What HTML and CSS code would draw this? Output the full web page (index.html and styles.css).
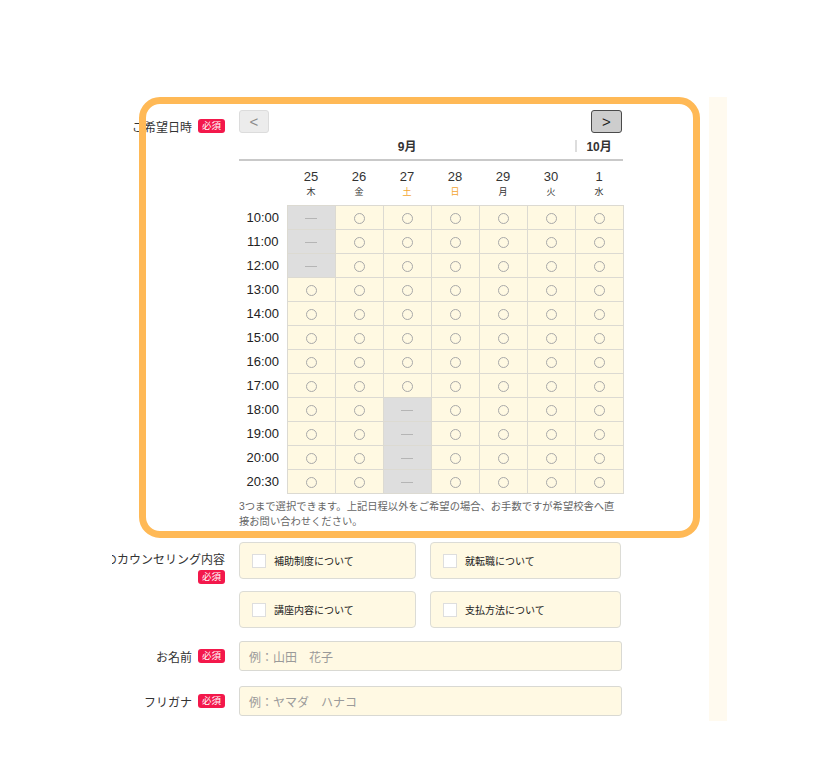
FILE: index.html
```html
<!DOCTYPE html>
<html lang="ja">
<head>
<meta charset="utf-8">
<title>ご希望日時</title>
<link rel="stylesheet" href="styles.css">
</head>
<body>
<div class="page">
  <div class="form">
    <div class="row row-date">
      <div class="label label-inline"><span class="ltext">ご希望日時</span><span class="badge">必須</span></div>
      <div class="content">
        <div class="nav">
          <button class="btn prev" type="button">&lt;</button>
          <button class="btn next" type="button">&gt;</button>
        </div>
        <table class="cal">
          <colgroup>
            <col class="c"><col class="c"><col class="c"><col class="c"><col class="c"><col class="c"><col class="c"><col class="c">
          </colgroup>
          <thead>
            <tr class="months">
              <th colspan="7" class="m9">9月</th>
              <th class="m10"><span class="sep"></span>10月</th>
            </tr>
            <tr class="days">
              <th></th>
              <th><span class="dn">25</span><span class="wd">木</span></th>
              <th><span class="dn">26</span><span class="wd">金</span></th>
              <th><span class="dn">27</span><span class="wd sat">土</span></th>
              <th><span class="dn">28</span><span class="wd sun">日</span></th>
              <th><span class="dn">29</span><span class="wd">月</span></th>
              <th><span class="dn">30</span><span class="wd">火</span></th>
              <th><span class="dn">1</span><span class="wd">水</span></th>
            </tr>
          </thead>
          <tbody>
            <tr><th>10:00</th><td class="off"><i class="dash"></i></td><td><i class="ok"></i></td><td><i class="ok"></i></td><td><i class="ok"></i></td><td><i class="ok"></i></td><td><i class="ok"></i></td><td><i class="ok"></i></td></tr>
            <tr><th>11:00</th><td class="off"><i class="dash"></i></td><td><i class="ok"></i></td><td><i class="ok"></i></td><td><i class="ok"></i></td><td><i class="ok"></i></td><td><i class="ok"></i></td><td><i class="ok"></i></td></tr>
            <tr><th>12:00</th><td class="off"><i class="dash"></i></td><td><i class="ok"></i></td><td><i class="ok"></i></td><td><i class="ok"></i></td><td><i class="ok"></i></td><td><i class="ok"></i></td><td><i class="ok"></i></td></tr>
            <tr><th>13:00</th><td><i class="ok"></i></td><td><i class="ok"></i></td><td><i class="ok"></i></td><td><i class="ok"></i></td><td><i class="ok"></i></td><td><i class="ok"></i></td><td><i class="ok"></i></td></tr>
            <tr><th>14:00</th><td><i class="ok"></i></td><td><i class="ok"></i></td><td><i class="ok"></i></td><td><i class="ok"></i></td><td><i class="ok"></i></td><td><i class="ok"></i></td><td><i class="ok"></i></td></tr>
            <tr><th>15:00</th><td><i class="ok"></i></td><td><i class="ok"></i></td><td><i class="ok"></i></td><td><i class="ok"></i></td><td><i class="ok"></i></td><td><i class="ok"></i></td><td><i class="ok"></i></td></tr>
            <tr><th>16:00</th><td><i class="ok"></i></td><td><i class="ok"></i></td><td><i class="ok"></i></td><td><i class="ok"></i></td><td><i class="ok"></i></td><td><i class="ok"></i></td><td><i class="ok"></i></td></tr>
            <tr><th>17:00</th><td><i class="ok"></i></td><td><i class="ok"></i></td><td><i class="ok"></i></td><td><i class="ok"></i></td><td><i class="ok"></i></td><td><i class="ok"></i></td><td><i class="ok"></i></td></tr>
            <tr><th>18:00</th><td><i class="ok"></i></td><td><i class="ok"></i></td><td class="off"><i class="dash"></i></td><td><i class="ok"></i></td><td><i class="ok"></i></td><td><i class="ok"></i></td><td><i class="ok"></i></td></tr>
            <tr><th>19:00</th><td><i class="ok"></i></td><td><i class="ok"></i></td><td class="off"><i class="dash"></i></td><td><i class="ok"></i></td><td><i class="ok"></i></td><td><i class="ok"></i></td><td><i class="ok"></i></td></tr>
            <tr><th>20:00</th><td><i class="ok"></i></td><td><i class="ok"></i></td><td class="off"><i class="dash"></i></td><td><i class="ok"></i></td><td><i class="ok"></i></td><td><i class="ok"></i></td><td><i class="ok"></i></td></tr>
            <tr><th>20:30</th><td><i class="ok"></i></td><td><i class="ok"></i></td><td class="off"><i class="dash"></i></td><td><i class="ok"></i></td><td><i class="ok"></i></td><td><i class="ok"></i></td><td><i class="ok"></i></td></tr>
          </tbody>
        </table>
        <p class="note">3つまで選択できます。上記日程以外をご希望の場合、お手数ですが希望校舎へ直接お問い合わせください。</p>
      </div>
    </div>

    <div class="row row-topics">
      <div class="label label-stack"><span class="ltext">ご希望のカウンセリング内容</span><span class="badge">必須</span></div>
      <div class="content topics">
        <label class="topic"><span class="cb"></span><span>補助制度について</span></label>
        <label class="topic"><span class="cb"></span><span>就転職について</span></label>
        <label class="topic"><span class="cb"></span><span>講座内容について</span></label>
        <label class="topic"><span class="cb"></span><span>支払方法について</span></label>
      </div>
    </div>

    <div class="row row-field row-name">
      <div class="label label-inline"><span class="ltext">お名前</span><span class="badge">必須</span></div>
      <div class="content"><div class="input">例：山田　花子</div></div>
    </div>

    <div class="row row-field row-kana">
      <div class="label label-inline"><span class="ltext">フリガナ</span><span class="badge">必須</span></div>
      <div class="content"><div class="input">例：ヤマダ　ハナコ</div></div>
    </div>
  </div>
  <div class="strip"></div>
</div>
<div class="highlight"></div>
</body>
</html>
```

FILE: styles.css
```css
html, body {
  margin: 0;
  padding: 0;
  background: #ffffff;
}

body {
  font-family: "Liberation Sans", "Noto Sans CJK JP", sans-serif;
  color: #333333;
}

.page {
  display: flex;
  align-items: flex-start;
  padding-top: 97px;
  padding-left: 112px;
}

.form {
  width: 597px;
  overflow: hidden;
  padding-top: 13px;
  flex: none;
}

.strip {
  flex: none;
  width: 18px;
  height: 624px;
  background: #fffaef;
}

.row {
  display: grid;
  grid-template-columns: 113px 384px;
  column-gap: 14px;
}

.label {
  display: flex;
  white-space: nowrap;
  font-size: 12px;
  color: #333;
}

.label-inline {
  justify-content: flex-end;
  align-items: center;
  gap: 6px;
}

.label-stack {
  flex-direction: column;
  align-items: flex-end;
  padding-top: 8px;
}

.label-stack .ltext {
  line-height: 20px;
}

.ltext {
  flex: none;
}

.badge {
  flex: none;
  display: inline-flex;
  align-items: center;
  justify-content: center;
  width: 27px;
  height: 14px;
  border-radius: 3px;
  background: #f3184b;
  color: #ffffff;
  font-size: 9.5px;
  line-height: 14px;
}

/* date row */
.row-date .label {
  height: 14px;
  margin-top: 9px;
}

.nav {
  display: flex;
  justify-content: space-between;
  height: 22px;
  padding-right: 1px;
}

.btn {
  box-sizing: border-box;
  margin: 0;
  padding: 0;
  height: 23px;
  border-radius: 3px;
  font-family: "Liberation Sans", sans-serif;
  font-size: 15px;
  line-height: 20px;
}

.prev {
  width: 30px;
  background: #ececec;
  border: 1px solid #dcdcdc;
  color: #8a8a8a;
}

.next {
  width: 31px;
  background: #cdcdcd;
  border: 1px solid #4a4a4a;
  color: #222;
}

.cal {
  width: 384px;
  table-layout: fixed;
  border-collapse: collapse;
  border-spacing: 0;
}

.cal col.c {
  width: 48px;
}

.cal th, .cal td {
  padding: 0;
  text-align: center;
}

.months th {
  height: 27px;
  border-bottom: 2px solid #c9c9c9;
  font-size: 12px;
  font-weight: bold;
  color: #333;
  vertical-align: middle;
}

.m10 {
  position: relative;
}

.sep {
  position: absolute;
  left: 0;
  top: 8px;
  width: 2px;
  height: 12px;
  background: #dddddd;
}

.days th {
  height: 44px;
  font-weight: normal;
  vertical-align: top;
}

.dn {
  display: block;
  font-size: 13px;
  line-height: 14px;
  margin-top: 9px;
  color: #333;
}

.wd {
  display: block;
  font-size: 9px;
  line-height: 12px;
  margin-top: 2px;
  color: #333;
}

.wd.sat, .wd.sun {
  color: #f3a531;
}

.cal tbody th {
  height: 24px;
  font-size: 13px;
  font-weight: normal;
  color: #222;
}

.cal td {
  height: 23px;
  background: #fff9e2;
  border: 1px solid #dcdad2;
  vertical-align: middle;
}

.cal td.off {
  background: #dedede;
}

.ok {
  display: inline-block;
  box-sizing: border-box;
  width: 11px;
  height: 11px;
  border: 1px solid #a9a9a9;
  border-radius: 50%;
  vertical-align: middle;
}

.dash {
  display: inline-block;
  width: 12px;
  height: 1px;
  background: #b5b5b5;
  vertical-align: middle;
}

.note {
  margin: 5px 0 13px;
  font-size: 10.3px;
  line-height: 15px;
  color: #666;
}

/* topics */
.topics {
  display: grid;
  grid-template-columns: 177px 191px;
  column-gap: 14px;
  row-gap: 12px;
}

.topic {
  box-sizing: border-box;
  display: flex;
  align-items: center;
  height: 37px;
  padding-left: 12px;
  gap: 8px;
  background: #fff9e3;
  border: 1px solid #dcdcd6;
  border-radius: 4px;
  font-size: 10px;
  color: #222;
}

.cb {
  box-sizing: border-box;
  width: 14px;
  height: 14px;
  background: #ffffff;
  border: 1px solid #dedede;
}

/* fields */
.row-field .label {
  height: 30px;
}

.row-name {
  margin-top: 13px;
}

.row-kana {
  margin-top: 15px;
}

.input {
  box-sizing: border-box;
  width: 383px;
  height: 30px;
  display: flex;
  align-items: center;
  padding-left: 9px;
  background: #fff9e3;
  border: 1px solid #d9d9d3;
  border-radius: 3px;
  font-size: 12px;
  color: #9a9a9a;
}

.highlight {
  position: absolute;
  left: 139px;
  top: 97px;
  width: 561px;
  height: 441px;
  box-sizing: border-box;
  border: 7px solid #ffb956;
  border-radius: 21px;
  pointer-events: none;
}
```
